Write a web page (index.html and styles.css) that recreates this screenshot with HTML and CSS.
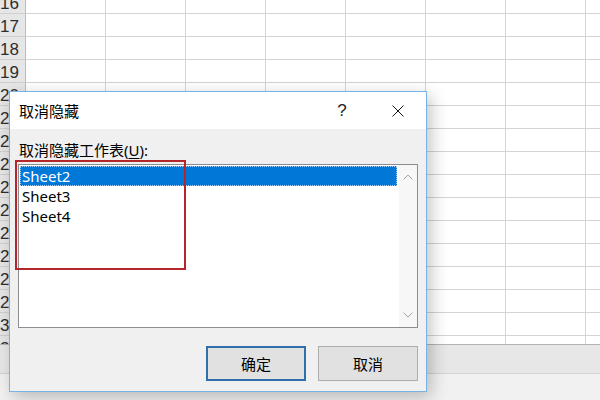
FILE: index.html
```html
<!DOCTYPE html>
<html lang="zh-CN">
<head>
<meta charset="utf-8">
<title>取消隐藏</title>
<link rel="stylesheet" href="styles.css">
</head>
<body>
<div class="sheet">
  <div class="grid">
    <div class="rows">
      <div class="row"><div class="rh">16</div><div class="cells"></div></div>
      <div class="row"><div class="rh">17</div><div class="cells"></div></div>
      <div class="row"><div class="rh">18</div><div class="cells"></div></div>
      <div class="row"><div class="rh">19</div><div class="cells"></div></div>
      <div class="row"><div class="rh">20</div><div class="cells"></div></div>
      <div class="row"><div class="rh">21</div><div class="cells"></div></div>
      <div class="row"><div class="rh">22</div><div class="cells"></div></div>
      <div class="row"><div class="rh">23</div><div class="cells"></div></div>
      <div class="row"><div class="rh">24</div><div class="cells"></div></div>
      <div class="row"><div class="rh">25</div><div class="cells"></div></div>
      <div class="row"><div class="rh">26</div><div class="cells"></div></div>
      <div class="row"><div class="rh">27</div><div class="cells"></div></div>
      <div class="row"><div class="rh">28</div><div class="cells"></div></div>
      <div class="row"><div class="rh">29</div><div class="cells"></div></div>
      <div class="row"><div class="rh">30</div><div class="cells"></div></div>
      <div class="row"><div class="rh">31</div><div class="cells"></div></div>
    </div>
  </div>
  <div class="tabbar"></div>
  <div class="statusbar"></div>
</div>

<div class="dialog">
  <div class="titlebar">
    <div class="title">取消隐藏</div>
    <div class="tbtn help">?</div>
    <div class="tbtn close">
      <svg width="12" height="12" viewBox="0 0 12 12"><path d="M0.5 0.5 L11.5 11.5 M11.5 0.5 L0.5 11.5" stroke="#111" stroke-width="1" fill="none"/></svg>
    </div>
  </div>
  <div class="body">
    <div class="label">取消隐藏工作表(<u>U</u>):</div>
    <div class="listbox">
      <div class="items">
        <div class="item selected">Sheet2</div>
        <div class="item">Sheet3</div>
        <div class="item">Sheet4</div>
      </div>
      <div class="scrollbar">
        <svg class="chev" width="10" height="6" viewBox="0 0 10 6"><path d="M0.5 5.5 L5 1 L9.5 5.5" stroke="#a6a6a6" fill="none"/></svg>
        <svg class="chev" width="10" height="6" viewBox="0 0 10 6"><path d="M0.5 0.5 L5 5 L9.5 0.5" stroke="#a6a6a6" fill="none"/></svg>
      </div>
    </div>
    <div class="buttons">
      <div class="btn default">确定</div>
      <div class="btn">取消</div>
    </div>
  </div>
</div>

<div class="highlight"></div>
</body>
</html>
```

FILE: styles.css
```css
html, body {
  margin: 0;
  padding: 0;
}
body {
  width: 600px;
  height: 400px;
  overflow: hidden;
  position: relative;
  background: #fff;
  font-family: "Noto Sans", "Noto Sans CJK SC", sans-serif;
}

/* spreadsheet background */
.sheet {
  display: flex;
  flex-direction: column;
  height: 400px;
}
.grid {
  height: 344px;
  overflow: hidden;
}
.rows {
  margin-top: -9px;
}
.row {
  display: flex;
  height: 23px;
  box-sizing: border-box;
  border-bottom: 1px solid #d4d4d4;
}
.rh {
  width: 25px;
  flex: none;
  background: #e6e6e6;
  border-right: 1px solid #bcbcbc;
  font-family: "Liberation Sans", Arial, sans-serif;
  font-size: 17px;
  line-height: 25px;
  color: #2e2e2e;
  white-space: nowrap;
  overflow: hidden;
  margin-bottom: -1px;
  border-bottom: 1px solid #cfcfcf;
}
.cells {
  flex: 1;
  background: repeating-linear-gradient(to right, transparent 0, transparent 79px, #d4d4d4 79px, #d4d4d4 80px);
}
.tabbar {
  height: 28px;
  border-top: 1px solid #b4b4b4;
  border-bottom: 1px solid #d2d2d2;
  background: #e7e7e7;
}
.statusbar {
  flex: 1;
  background: #f1f1f1;
}

/* dialog */
.dialog {
  position: absolute;
  left: 9px;
  top: 91px;
  width: 418px;
  height: 301px;
  box-sizing: border-box;
  border: 1px solid #78b3e3;
  background: #f0f0f0;
  display: flex;
  flex-direction: column;
  box-shadow: 4px 5px 16px rgba(0, 0, 0, 0.24);
}
.titlebar {
  height: 37px;
  flex: none;
  background: #fff;
  display: flex;
  align-items: center;
  padding-left: 9px;
}
.title {
  flex: 1;
  font-size: 15px;
  color: #000;
}
.tbtn {
  width: 56px;
  height: 37px;
  display: flex;
  align-items: center;
  justify-content: center;
  font-size: 17px;
  color: #222;
}
.help {
  font-family: "Liberation Sans", Arial, sans-serif;
}
.body {
  flex: 1;
  padding: 11px 8px 0 8px;
  display: flex;
  flex-direction: column;
}
.label {
  font-size: 15px;
  line-height: 20px;
  color: #000;
  padding-left: 1px;
}
.label u {
  text-decoration-thickness: 1px;
  text-underline-offset: 2px;
}
.listbox {
  margin-top: 4px;
  height: 164px;
  box-sizing: border-box;
  border: 1px solid #8a8d92;
  background: #fff;
  display: flex;
}
.items {
  flex: 1;
  padding: 1px 2px 0 1px;
}
.item {
  height: 20px;
  line-height: 20px;
  font-size: 15px;
  color: #000;
  padding-left: 2px;
}
.item.selected {
  background: #0078d7;
  color: #fff;
  outline: 1px dotted #a8d0f2;
  outline-offset: -1px;
}
.scrollbar {
  width: 18px;
  flex: none;
  background: #f7f7f7;
  display: flex;
  flex-direction: column;
  justify-content: space-between;
  align-items: center;
  padding: 9px 0 9px 0;
}
.chev {
  display: block;
}
.buttons {
  margin-top: 18px;
  display: flex;
  justify-content: flex-end;
  gap: 12px;
}
.btn {
  width: 100px;
  height: 35px;
  box-sizing: border-box;
  border: 1px solid #adadad;
  background: #e1e1e1;
  font-size: 15px;
  color: #000;
  display: flex;
  align-items: center;
  justify-content: center;
}
.btn.default {
  border: 2px solid #2f6fab;
}

/* red annotation box */
.highlight {
  position: absolute;
  left: 15px;
  top: 160px;
  width: 171px;
  height: 110px;
  box-sizing: border-box;
  border: 2px solid #b3262b;
}
```
